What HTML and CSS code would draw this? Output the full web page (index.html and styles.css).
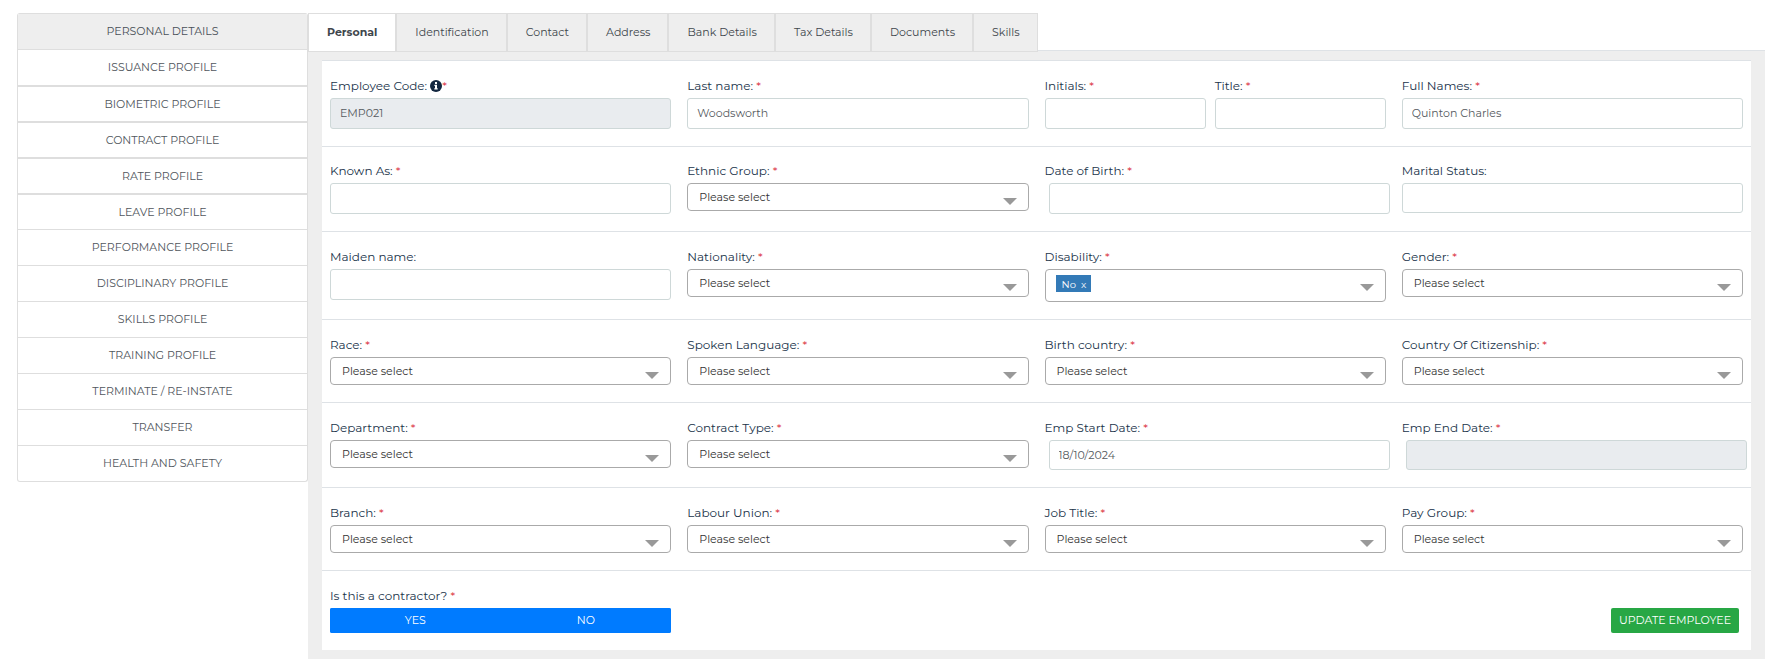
FILE: index.html
```html
<!DOCTYPE html>
<html lang="en">
<head>
<meta charset="utf-8">
<meta name="viewport" content="width=device-width, initial-scale=1">
<title>Employee – Personal Details</title>
<link rel="stylesheet" href="styles.css">
</head>
<body>
<div class="layout">
  <nav class="sidebar" aria-label="Profile sections">
    <a class="side-link active" href="#">PERSONAL DETAILS</a>
    <a class="side-link" href="#">ISSUANCE PROFILE</a>
    <a class="side-link thick" href="#">BIOMETRIC PROFILE</a>
    <a class="side-link thick" href="#">CONTRACT PROFILE</a>
    <a class="side-link thick" href="#">RATE PROFILE</a>
    <a class="side-link thick" href="#">LEAVE PROFILE</a>
    <a class="side-link" href="#">PERFORMANCE PROFILE</a>
    <a class="side-link" href="#">DISCIPLINARY PROFILE</a>
    <a class="side-link" href="#">SKILLS PROFILE</a>
    <a class="side-link" href="#">TRAINING PROFILE</a>
    <a class="side-link" href="#">TERMINATE / RE-INSTATE</a>
    <a class="side-link" href="#">TRANSFER</a>
    <a class="side-link" href="#">HEALTH AND SAFETY</a>
  </nav>

  <main class="content">
    <nav class="tabs" aria-label="Employee details">
      <a class="tab active" href="#">Personal</a>
      <a class="tab" href="#">Identification</a>
      <a class="tab" href="#">Contact</a>
      <a class="tab" href="#">Address</a>
      <a class="tab" href="#">Bank Details</a>
      <a class="tab" href="#">Tax Details</a>
      <a class="tab" href="#">Documents</a>
      <a class="tab" href="#">Skills</a>
    </nav>

    <div class="pane">
      <form class="panel">
        <div class="row">
          <div class="field">
            <label for="code">Employee Code: <svg class="info" viewBox="0 0 12 12" aria-hidden="true"><circle cx="6" cy="6" r="6"/><path fill="#fff" d="M5 2h2v2H5zM4.400 4.800H7v3.400h.700V9.400H4.300V8.200H5V6h-.600z"/></svg><span class="req">*</span></label>
            <input class="input" id="code" type="text" value="EMP021" disabled>
          </div>
          <div class="field">
            <label for="last">Last name: <span class="req">*</span></label>
            <input class="input" id="last" type="text" value="Woodsworth">
          </div>
          <div class="field pair">
            <div class="initials">
              <label for="initials">Initials: <span class="req">*</span></label>
              <input class="input" id="initials" type="text">
            </div>
            <div class="title">
              <label for="title">Title: <span class="req">*</span></label>
              <input class="input" id="title" type="text">
            </div>
          </div>
          <div class="field">
            <label for="names">Full Names: <span class="req">*</span></label>
            <input class="input" id="names" type="text" value="Quinton Charles">
          </div>
        </div>

        <div class="row compact">
          <div class="field">
            <label for="known">Known As: <span class="req">*</span></label>
            <input class="input" id="known" type="text">
          </div>
          <div class="field">
            <label for="ethnic">Ethnic Group: <span class="req">*</span></label>
            <select class="select" id="ethnic"><option>Please select</option></select>
          </div>
          <div class="field">
            <label for="dob">Date of Birth: <span class="req">*</span></label>
            <div class="date"><input class="input" id="dob" type="text"></div>
          </div>
          <div class="field">
            <label for="marital">Marital Status:</label>
            <input class="input short" id="marital" type="text">
          </div>
        </div>

        <div class="row">
          <div class="field">
            <label for="maiden">Maiden name:</label>
            <input class="input" id="maiden" type="text">
          </div>
          <div class="field">
            <label for="nationality">Nationality: <span class="req">*</span></label>
            <select class="select" id="nationality"><option>Please select</option></select>
          </div>
          <div class="field">
            <label id="disability-label">Disability: <span class="req">*</span></label>
            <div class="multi" role="group" aria-labelledby="disability-label">
              <span class="tag">No <button class="tag-remove" type="button" aria-label="Remove No">x</button></span>
            </div>
          </div>
          <div class="field">
            <label for="gender">Gender: <span class="req">*</span></label>
            <select class="select" id="gender"><option>Please select</option></select>
          </div>
        </div>

        <div class="row">
          <div class="field">
            <label for="race">Race: <span class="req">*</span></label>
            <select class="select" id="race"><option>Please select</option></select>
          </div>
          <div class="field">
            <label for="language">Spoken Language: <span class="req">*</span></label>
            <select class="select" id="language"><option>Please select</option></select>
          </div>
          <div class="field">
            <label for="birth">Birth country: <span class="req">*</span></label>
            <select class="select" id="birth"><option>Please select</option></select>
          </div>
          <div class="field">
            <label for="citizen">Country Of Citizenship: <span class="req">*</span></label>
            <select class="select" id="citizen"><option>Please select</option></select>
          </div>
        </div>

        <div class="row">
          <div class="field">
            <label for="department">Department: <span class="req">*</span></label>
            <select class="select" id="department"><option>Please select</option></select>
          </div>
          <div class="field">
            <label for="contract">Contract Type: <span class="req">*</span></label>
            <select class="select" id="contract"><option>Please select</option></select>
          </div>
          <div class="field">
            <label for="start">Emp Start Date: <span class="req">*</span></label>
            <div class="date"><input class="input short" id="start" type="text" value="18/10/2024"></div>
          </div>
          <div class="field">
            <label for="end">Emp End Date: <span class="req">*</span></label>
            <div class="date"><input class="input short" id="end" type="text" disabled></div>
          </div>
        </div>

        <div class="row">
          <div class="field">
            <label for="branch">Branch: <span class="req">*</span></label>
            <select class="select" id="branch"><option>Please select</option></select>
          </div>
          <div class="field">
            <label for="union">Labour Union: <span class="req">*</span></label>
            <select class="select" id="union"><option>Please select</option></select>
          </div>
          <div class="field">
            <label for="job">Job Title: <span class="req">*</span></label>
            <select class="select" id="job"><option>Please select</option></select>
          </div>
          <div class="field">
            <label for="pay">Pay Group: <span class="req">*</span></label>
            <select class="select" id="pay"><option>Please select</option></select>
          </div>
        </div>

        <div class="row">
          <div class="field">
            <label id="contractor-label">Is this a contractor? <span class="req">*</span></label>
            <div class="toggle" role="group" aria-labelledby="contractor-label">
              <button class="btn blue" type="button">YES</button>
              <button class="btn blue" type="button">NO</button>
            </div>
          </div>
          <div class="submit">
            <button class="btn green" type="submit">UPDATE EMPLOYEE</button>
          </div>
        </div>
      </form>
    </div>
  </main>
</div>
</body>
</html>
```
FILE: styles.css
```css
* {
  box-sizing: border-box;
}

body {
  margin: 0;
  background: #fff;
  color: #495057;
  font-family: Montserrat, Inter, "Open Sans", sans-serif;
  font-size: 12px;
}

a {
  color: inherit;
  text-decoration: none;
}

button,
input,
select {
  margin: 0;
  font: inherit;
}

.layout {
  display: flex;
  align-items: flex-start;
  padding: 13px 16px 0 17px;
}

.sidebar {
  display: flex;
  flex: 0 0 17%;
  max-width: 291px;
  flex-direction: column;
  border: 1px solid #dedede;
  border-top: 0;
  border-radius: 3px;
  overflow: hidden;
}

.side-link {
  display: flex;
  align-items: center;
  justify-content: center;
  height: 36px;
  padding-bottom: 1px;
  border-top: 1px solid #dedede;
  color: #50565c;
  font-size: 11px;
}

.side-link.active {
  background: #eee;
  color: #495057;
}

.side-link.thick {
  border-top-width: 2px;
}

.content {
  flex: 1;
  min-width: 0;
}

.tabs {
  display: flex;
  height: 38px;
  border-bottom: 1px solid #dee2e6;
}

.tab {
  display: flex;
  align-items: center;
  height: 39px;
  padding: 0 17px 1px 18px;
  border: 1px solid #dedede;
  background: #eee;
  color: #40464c;
  font-size: 11px;
}

.tab.active {
  padding-right: 18px;
  background: #fff;
  font-weight: 700;
}

.pane {
  padding: 9px 14px;
  background: #eee;
}

.panel {
  background: #fff;
}

.row {
  display: flex;
  padding-bottom: 17px;
  border-top: 1px solid #dee2e6;
}

.field {
  flex: 0 0 25%;
  min-width: 0;
  padding: 16px 8px 0;
}

.compact .field {
  padding-top: 15px;
}

.field label {
  display: block;
  height: 21px;
  color: #20334a;
  line-height: 17px;
  white-space: nowrap;
}

.req {
  color: #dc3545;
}

.info {
  width: 12px;
  height: 12px;
  fill: #12263f;
  vertical-align: -2px;
}

.pair {
  display: flex;
  gap: 9px;
}

.initials {
  flex: 161;
  min-width: 0;
}

.title {
  flex: 171;
  min-width: 0;
}

.input {
  display: block;
  width: 100%;
  height: 31px;
  padding: 0 9px 1px;
  border: 1px solid #ced8d8;
  border-radius: 3px;
  background: #fff;
  color: #555a60;
  font-size: 11px;
}

.input.short {
  height: 30px;
}

.input:disabled {
  background: #e9ecef;
}

.date {
  margin: 0 -4px 0 4px;
}

.select,
.multi {
  border: 1px solid #aaa;
  border-radius: 4px;
  background: #fff url("data:image/svg+xml,%3Csvg xmlns='http://www.w3.org/2000/svg' width='14' height='7'%3E%3Cpath fill='%23999' d='M0 0h14L7 7z'/%3E%3C/svg%3E") no-repeat right 11px top 14px;
}

.select {
  display: block;
  width: 100%;
  height: 28px;
  padding: 0 32px 0 11px;
  appearance: none;
  color: #333;
  font-size: 11px;
}

.multi {
  height: 33px;
  padding: 5px 10px;
}

.tag {
  display: inline-flex;
  align-items: center;
  gap: 5px;
  height: 17px;
  padding: 2px 5px 0 6px;
  background: #337ab7;
  color: #fff;
  font-size: 10px;
}

.tag-remove {
  padding: 0;
  border: 0;
  background: none;
  color: inherit;
}

.btn {
  height: 25px;
  padding: 0 8px 1px;
  border: 0;
  border-radius: 2px;
  color: #fff;
  font-size: 11px;
}

.toggle {
  display: flex;
  border-radius: 2px;
  background: #007bff;
}

.blue {
  flex: 1;
  background: #007bff;
}

.submit {
  display: flex;
  flex: 1;
  align-items: flex-end;
  justify-content: flex-end;
  padding-right: 12px;
}

.green {
  background: #28a745;
}
```
